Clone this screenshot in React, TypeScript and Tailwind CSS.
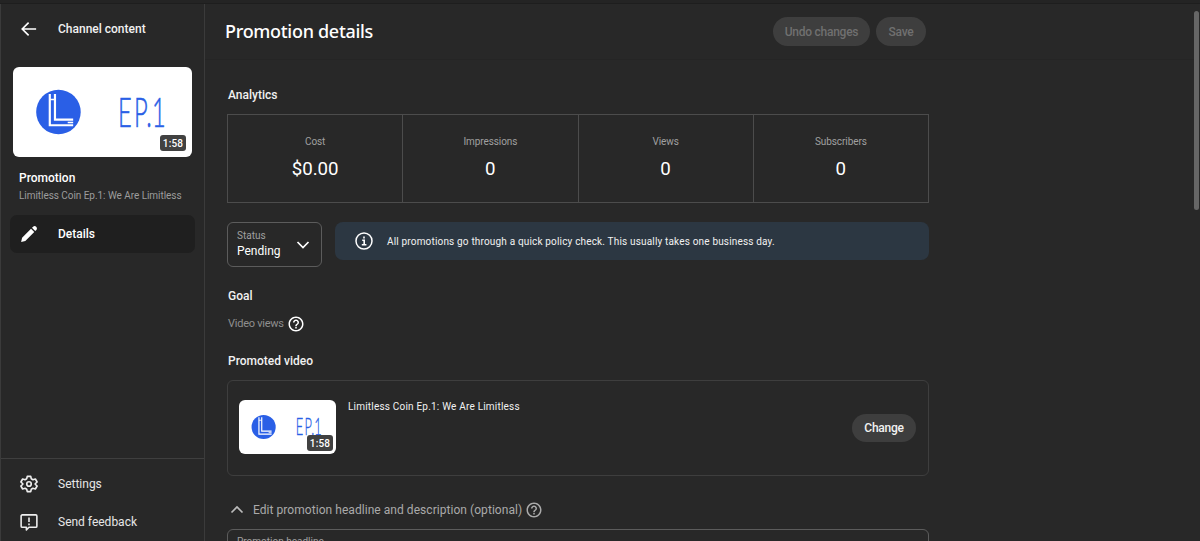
import React from "react";

const stats = [
  { label: "Cost", value: "$0.00" },
  { label: "Impressions", value: "0" },
  { label: "Views", value: "0" },
  { label: "Subscribers", value: "0" },
];

function HelpIcon({ className }: { className: string }) {
  return (
    <svg viewBox="0 0 24 24" fill="currentColor" className={className}>
      <path d="M11 18h2v-2h-2v2zm1-16C6.48 2 2 6.48 2 12s4.48 10 10 10 10-4.48 10-10S17.52 2 12 2zm0 18c-4.41 0-8-3.59-8-8s3.59-8 8-8 8 3.59 8 8-3.59 8-8 8zm0-14c-2.21 0-4 1.79-4 4h2c0-1.1.9-2 2-2s2 .9 2 2c0 2-3 1.75-3 5h2c0-2.25 3-2.5 3-5 0-2.21-1.79-4-4-4z" />
    </svg>
  );
}

function Thumbnail({ className, badge }: { className: string; badge: string }) {
  return (
    <div className={`relative overflow-hidden bg-white ${className}`}>
      <svg viewBox="0 0 180 90" className="block h-full w-full">
        <circle cx="45.7" cy="45" r="22.4" fill="#2a5fe6" />
        <g fill="none" stroke="#fff" strokeWidth="2.2">
          <path d="M37 27v31.3h23.500M42.2 27v25.700h18.300" />
          <path d="M37 32.500h5.200M55 55.500h5.500" strokeWidth="1.6" />
        </g>
        <text
          transform="translate(105.5 60.5) scale(0.56 1)"
          fontFamily="Lato, sans-serif"
          fontWeight="300"
          fontSize="42.5"
          fill="#2a5fe6"
          stroke="#2a5fe6"
          strokeWidth="0.6"
          x="0 29 51 61"
        >
          EP.1
        </text>
      </svg>
      <span
        className={`absolute flex h-4 w-[26px] items-center justify-center rounded-[3px] bg-[#414141] text-[10px] font-medium tracking-[0.2px] text-white ${badge}`}
      >
        1:58
      </span>
    </div>
  );
}

function Sidebar() {
  return (
    <aside className="flex w-[205px] shrink-0 flex-col border-x border-[#3b3b3b]">
      <div className="flex h-[50px] items-center pl-[19px]">
        <svg viewBox="0 0 24 24" className="h-[18px] w-[18px]" fill="none" stroke="#fff" strokeWidth="2.2">
          <path d="M21.5 12H3.5M11.5 3.5L3 12l8.5 8.5" />
        </svg>
        <span className="ml-5 text-[12px] font-medium">Channel content</span>
      </div>
      <Thumbnail className="ml-3 mt-[13px] h-[90px] w-[179px] rounded-[6px]" badge="bottom-1.5 right-1.5" />
      <div className="ml-[18px] mt-3 text-[12px] font-medium leading-[18px] text-white">Promotion</div>
      <div className="ml-[18px] whitespace-nowrap text-[10px] leading-[18px] tracking-[-0.05px] text-[#9c9c9c]">
        Limitless Coin Ep.1: We Are Limitless
      </div>
      <div className="ml-[9px] mt-[10px] flex h-[38px] w-[185px] items-center rounded-[7px] bg-[#1f1f1f] pl-[10px]">
        <svg viewBox="0 0 24 24" className="h-[18px] w-[18px]" fill="#fff">
          <path d="M1.5 22.5l1.3-5.6L14.7 5l4.3 4.3L7.1 21.2zM16 3.7l1.5-1.5c1.1-1.1 2.9-1.1 4 0l.3.3c1.1 1.1 1.1 2.9 0 4L20.3 8z" />
        </svg>
        <span className="ml-5 text-[12px] font-medium text-white">Details</span>
      </div>
      <div className="mt-auto border-t border-[#3f3f3f] pt-[6px]">
        <div className="flex h-[38px] items-center pl-[19px]">
          <svg viewBox="0 0 24 24" className="h-[18px] w-[18px]" fill="none" stroke="#eee" strokeWidth="2.2" strokeLinejoin="round">
            <path d="M9.7 1.8h4.6l.8 3.3 2.1 1.2 3.3-1 2.3 4-2.5 2.4v.6l2.5 2.4-2.3 4-3.3-1-2.1 1.2-.8 3.3H9.7l-.8-3.3-2.1-1.2-3.3 1-2.3-4 2.5-2.4v-.6L1.2 9.3l2.3-4 3.3 1 2.1-1.2z" />
            <circle cx="12" cy="12" r="3" />
          </svg>
          <span className="ml-5 text-[12px] text-[#e6e6e6]">Settings</span>
        </div>
        <div className="flex h-[38px] items-center pl-[19px]">
          <svg viewBox="0 0 24 24" className="h-[18px] w-[18px]" fill="none" stroke="#eee" strokeWidth="2.1" strokeLinejoin="round">
            <path d="M3 2.5h18a1.5 1.5 0 011.5 1.5v13.5A1.5 1.5 0 0121 19H12l-3.5 3.5V19H3a1.5 1.5 0 01-1.5-1.5V4A1.5 1.5 0 013 2.5z" />
            <path d="M12 6v6M12 14v2.2" />
          </svg>
          <span className="ml-5 text-[12px] text-[#e6e6e6]">Send feedback</span>
        </div>
      </div>
    </aside>
  );
}

export default function App() {
  return (
    <div className="flex h-[541px] w-[1200px] flex-col overflow-hidden bg-[#282828] font-['Roboto',sans-serif] text-[#f1f1f1]">
      <div className="h-1 shrink-0 border-b border-[#1e1e1e] bg-[#242424]" />
      <div className="flex min-h-0 flex-1">
        <Sidebar />
        <main className="flex min-w-0 flex-1 flex-col">
          <header className="flex h-[56px] shrink-0 items-center border-b border-[#252525] pl-5">
            <h1 className="w-[548px] font-['Noto_Sans',sans-serif] text-[18px] font-medium tracking-[-0.3px] text-white">
              Promotion details
            </h1>
            <button className="h-[29px] w-[97px] rounded-full bg-[#3e3e3e] text-[12px] font-medium tracking-[-0.25px] text-[#707070]">
              Undo changes
            </button>
            <button className="ml-[6px] h-[29px] w-[50px] rounded-full bg-[#3e3e3e] text-[12px] font-medium tracking-[-0.25px] text-[#707070]">
              Save
            </button>
          </header>

          <div className="ml-[22px] w-[702px]">
            <h2 className="mt-[26px] pl-px text-[12px] font-medium leading-[18px]">Analytics</h2>
            <div className="mt-[10px] flex h-[89px] border border-[#4c4c4c]">
              {stats.map((s) => (
                <div
                  key={s.label}
                  className="flex flex-1 flex-col items-center border-l border-[#4c4c4c] pt-[18px] first:border-l-0"
                >
                  <span className="text-[10px] leading-[18px] tracking-[-0.08px] text-[#a0a0a0]">{s.label}</span>
                  <span className="mt-[5px] text-[18.7px] leading-[26px] text-white">{s.value}</span>
                </div>
              ))}
            </div>

            <div className="mt-[19px] flex items-start">
              <div className="flex h-[45px] w-[95px] items-center justify-between rounded-[6px] border border-[#5c5c5c] pl-[9px] pr-[11px]">
                <div>
                  <div className="text-[10px] leading-[13px] text-[#a0a0a0]">Status</div>
                  <div className="pb-px text-[12px] leading-[18px] text-white">Pending</div>
                </div>
                <svg viewBox="0 0 14 10" className="h-[10px] w-[14px]" fill="none" stroke="#fff" strokeWidth="1.7">
                  <path d="M1.5 2L7 7.5 12.5 2" />
                </svg>
              </div>
              <div className="ml-[13px] flex h-[38px] w-[594px] items-center rounded-[8px] bg-[#2c3742] pl-5">
                <svg viewBox="0 0 18 18" className="h-[18px] w-[18px]" fill="none" stroke="#fff">
                  <circle cx="9" cy="9" r="8" strokeWidth="1.5" />
                  <path d="M9 4.5v2M7.2 8.2H9.2V12.5M6.8 12.7h4.6" strokeWidth="1.6" />
                </svg>
                <span className="ml-[14px] text-[10px] tracking-[0.17px]">
                  All promotions go through a quick policy check. This usually takes one business day.
                </span>
              </div>
            </div>

            <h2 className="mt-5 pl-px text-[12px] font-medium leading-[18px]">Goal</h2>
            <div className="mt-[9px] flex h-[20px] items-center pl-px text-[11px] tracking-[-0.25px] text-[#8f8f8f]">
              Video views
              <HelpIcon className="ml-[3px] h-[18px] w-[18px] text-white" />
            </div>
            <h2 className="mt-[18px] pl-px text-[12px] font-medium leading-[18px]">Promoted video</h2>

            <div className="mt-[10px] flex h-[96px] rounded-[6px] border border-[#3e3e3e] pl-[11px] pt-[19px]">
              <Thumbnail className="h-[54px] w-[97px] rounded-[6px]" badge="bottom-[3px] right-[3px]" />
              <div className="ml-[12px] w-[504px] text-[10px] leading-[14px] tracking-[0.2px]">
                Limitless Coin Ep.1: We Are Limitless
              </div>
              <button className="mt-[14px] h-[28px] w-[64px] rounded-full bg-[#3e3e3e] text-[12px] font-medium tracking-[-0.25px]">
                Change
              </button>
            </div>

            <div className="mt-[24px] flex h-5 items-center text-[12px] text-[#aaa]">
              <svg viewBox="0 0 14 10" className="ml-[3px] h-[10px] w-[14px]" fill="none" stroke="#bbb" strokeWidth="1.7">
                <path d="M1.5 7.5L7 2 12.5 7.5" />
              </svg>
              <span className="ml-[9px] tracking-[0.05px]">Edit promotion headline and description (optional)</span>
              <HelpIcon className="ml-[3px] h-[18px] w-[18px]" />
            </div>
            <div className="mt-[9px] h-[60px] rounded-[6px] border border-[#5c5c5c] pl-[9px] pt-[5px] text-[10px] leading-[14px] text-[#a0a0a0]">
              Promotion headline
            </div>
          </div>
        </main>
        <div className="w-[6px] pt-[7px]">
          <div className="h-[199px] w-[5px] rounded-full bg-[#666]" />
        </div>
      </div>
    </div>
  );
}
